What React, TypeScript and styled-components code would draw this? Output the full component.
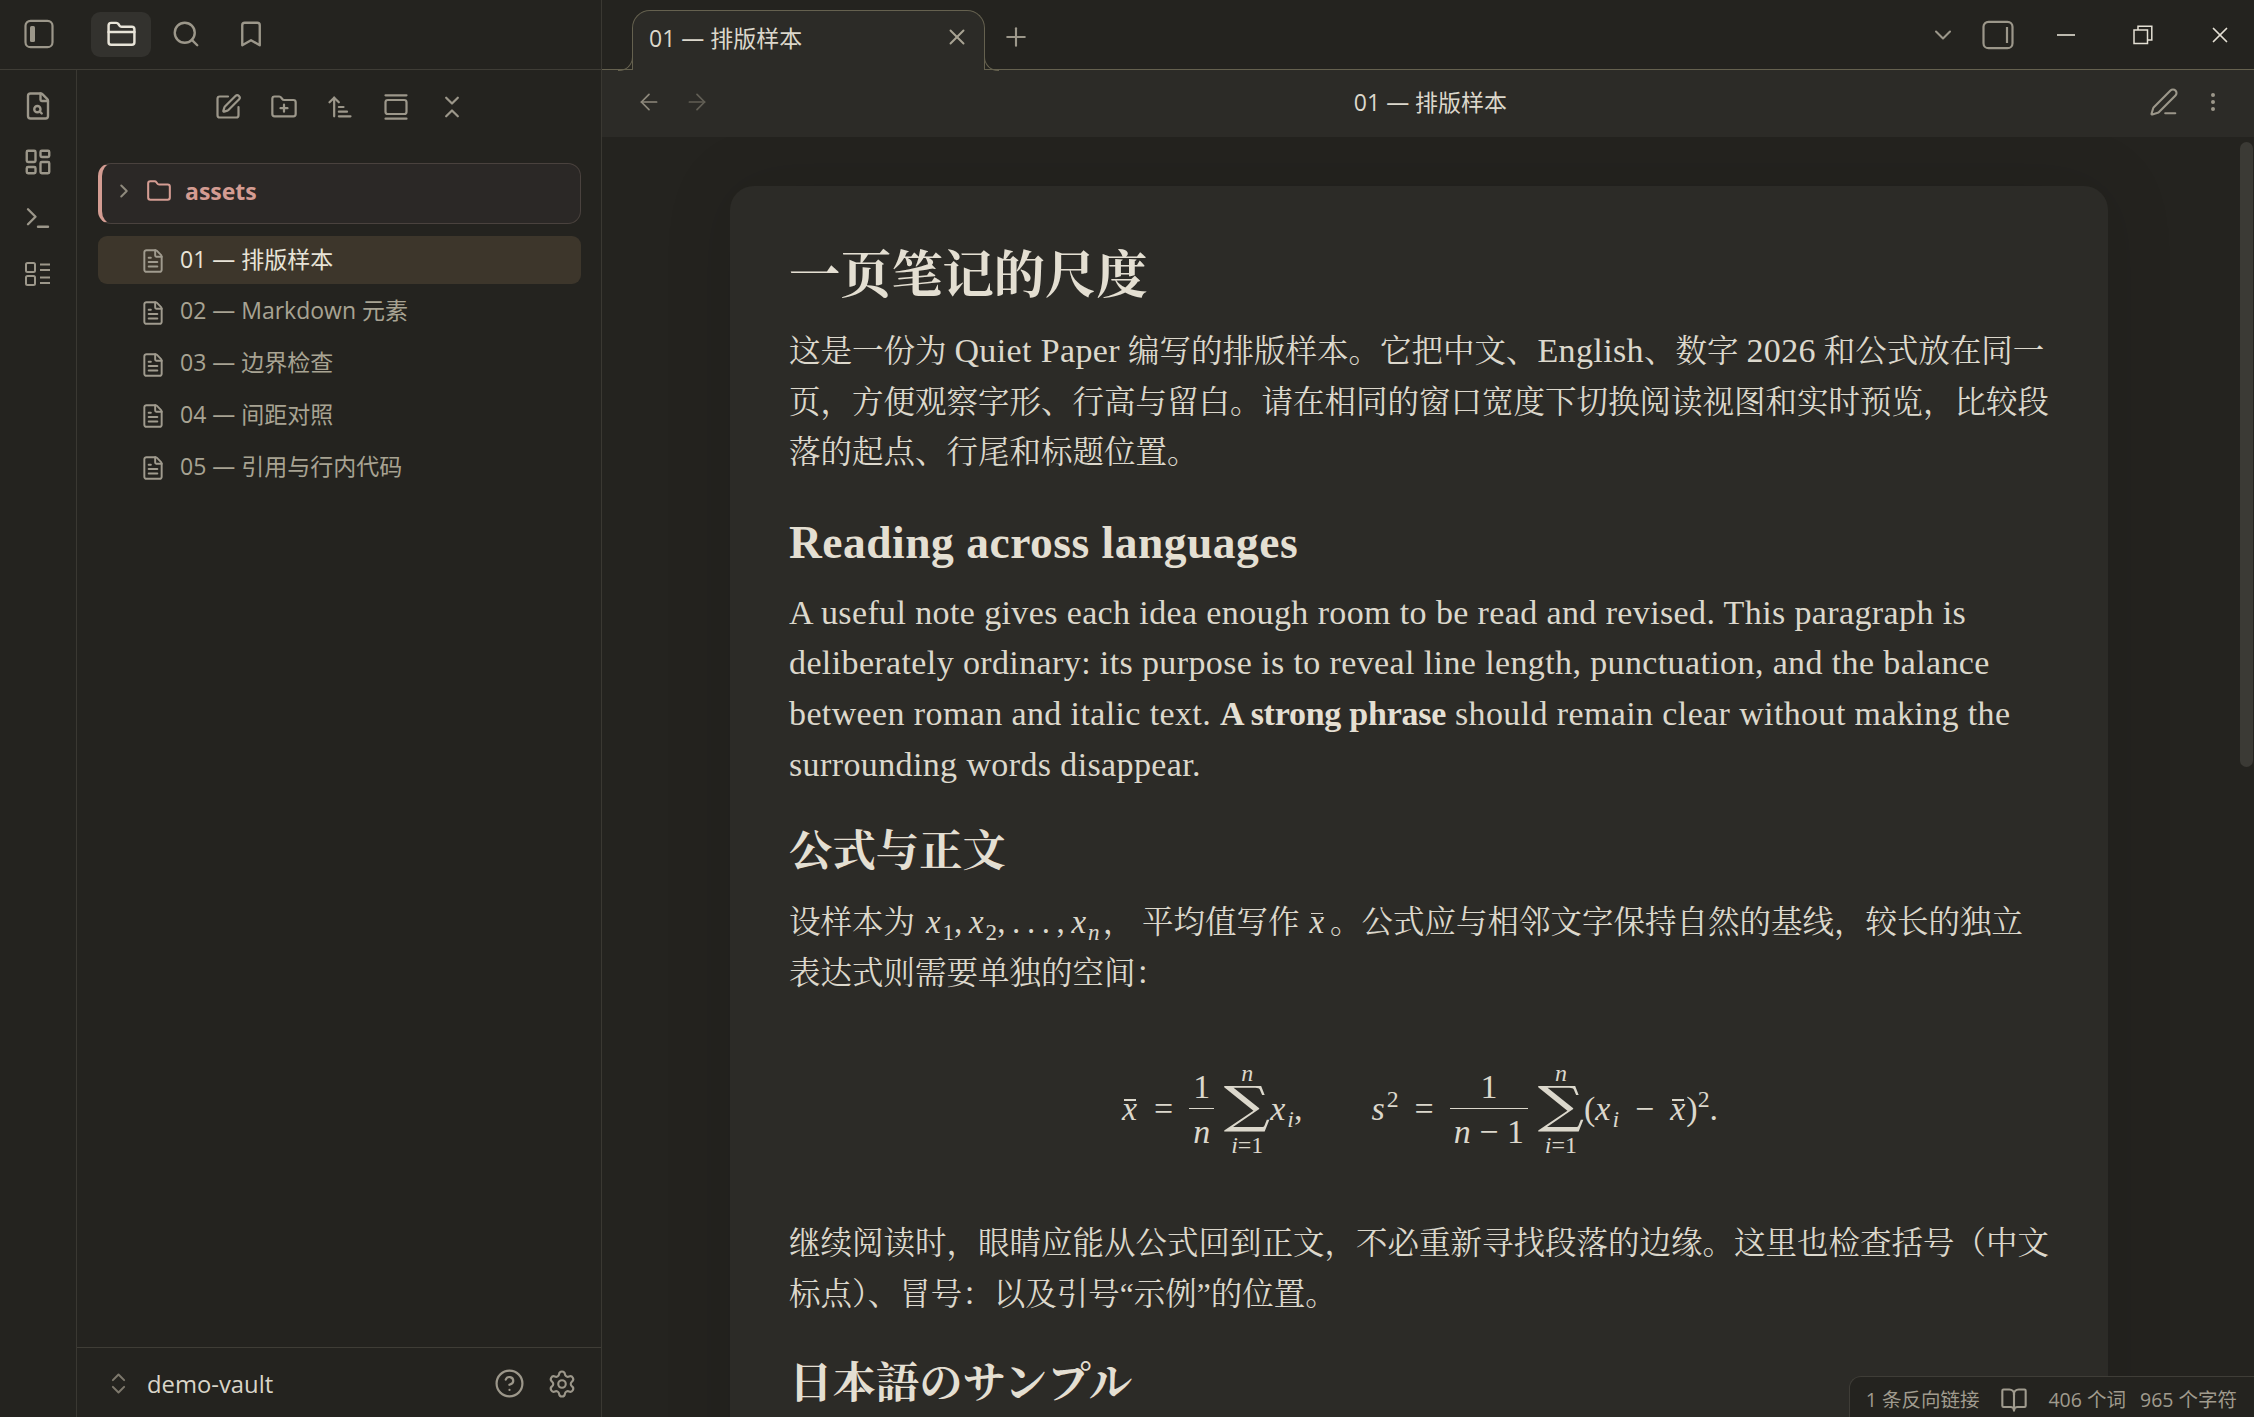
import React from 'react';
import styled, { createGlobalStyle } from 'styled-components';
import {
  ArrowLeft,
  ArrowRight,
  ArrowUpNarrowWide,
  Bookmark,
  BookOpen,
  ChevronDown,
  ChevronRight,
  ChevronsDownUp,
  ChevronsUpDown,
  CircleHelp,
  EllipsisVertical,
  FileSearch,
  FileText,
  Folder,
  FolderClosed,
  FolderPlus,
  GalleryVertical,
  LayoutDashboard,
  PenLine,
  Plus,
  Search,
  Settings,
  SquarePen,
  Terminal,
  X,
} from 'lucide-react';

const UI_FONT = `"Open Sans", "Noto Sans CJK SC", sans-serif`;
const READ_FONT = `"Liberation Serif", "Noto Serif CJK SC", "Noto Sans CJK SC", serif`;

const GlobalStyle = createGlobalStyle`
  html, body {
    margin: 0;
    padding: 0;
    height: 100%;
    background: #24231f;
    overflow: hidden;
  }
  * { box-sizing: border-box; }
`;

const Shell = styled.div`
  display: flex;
  width: 2254px;
  height: 1417px;
  background: #24231f;
  color: #dcd8cc;
  font-family: ${UI_FONT};
  overflow: hidden;
`;

/* left side: sidebar tabs on top, ribbon + file panel below */
const LeftPane = styled.aside`
  flex: 0 0 602px;
  display: flex;
  flex-direction: column;
  border-right: 1px solid #3a3832;
`;

const SideTabs = styled.div`
  flex: 0 0 70px;
  display: flex;
  align-items: center;
  padding: 0 0 1px 24px;
  border-bottom: 1px solid #3f3d36;
`;

const ToggleSlot = styled.div`
  display: flex;
  width: 67px;
  color: #9c978a;
`;

const SideTab = styled.div<{ $active?: boolean }>`
  width: 60px;
  height: 45px;
  margin-right: 5px;
  display: flex;
  align-items: center;
  justify-content: center;
  border-radius: 9px;
  color: ${(p) => (p.$active ? '#e8e4d8' : '#9c978a')};
  background: ${(p) => (p.$active ? '#33322e' : 'transparent')};
`;

const LeftBody = styled.div`
  flex: 1;
  display: flex;
  min-height: 0;
`;

const Ribbon = styled.nav`
  flex: 0 0 77px;
  display: flex;
  flex-direction: column;
  align-items: center;
  gap: 26px;
  padding-top: 21px;
  border-right: 1px solid #3a3832;
  color: #9c978a;
`;

const FilePanel = styled.div`
  flex: 1;
  display: flex;
  flex-direction: column;
  min-width: 0;
`;

const NavButtons = styled.div`
  display: flex;
  justify-content: center;
  gap: 28px;
  padding: 23px 0 0 2px;
  height: 93px;
  color: #9c978a;
`;

const FileTree = styled.div`
  flex: 1;
  padding: 0 20px 0 21px;
`;

const FolderRow = styled.div`
  height: 61px;
  display: flex;
  align-items: center;
  padding: 0 0 6px 11px;
  border: 1px solid #4a423e;
  border-left: 4px solid #d49c92;
  border-radius: 13px;
  background: #2b2826;
  color: #8f8a7d;
  margin-bottom: 12px;
`;

const FolderIcon = styled.span`
  display: flex;
  margin: 0 13px 0 11px;
  color: #d49c92;
`;

const FolderName = styled.span`
  font-size: 23px;
  font-weight: 700;
  color: #d49c92;
`;

const FileRow = styled.div<{ $active?: boolean }>`
  height: 48px;
  margin-bottom: 3.75px;
  display: flex;
  align-items: center;
  padding-left: 42px;
  border-radius: 9px;
  font-size: 23px;
  white-space: nowrap;
  color: ${(p) => (p.$active ? '#e8e4d8' : '#a8a393')};
  background: ${(p) => (p.$active ? '#3d362b' : 'transparent')};

  svg {
    color: #a09b8e;
    margin: 2px 14px 0 0;
    flex: none;
  }
`;

const FileLabel = styled.span`
  display: block;
  margin-bottom: 5px;
`;

const VaultBar = styled.div`
  flex: 0 0 70px;
  display: flex;
  align-items: center;
  padding: 2px 24px 0 28px;
  border-top: 1px solid #3f3d36;
  color: #7d786c;
`;

const VaultName = styled.span`
  flex: 1;
  margin-left: 15px;
  font-size: 23.8px;
  color: #d9d5c9;
`;

const VaultAction = styled.span`
  display: flex;
  margin-left: 22px;
  color: #9c978a;
`;

/* right side: tab strip, view header, scrolling note */
const MainPane = styled.main`
  flex: 1;
  display: flex;
  flex-direction: column;
  min-width: 0;
`;

const TabStrip = styled.div`
  flex: 0 0 70px;
  display: flex;
  align-items: flex-end;
  padding-left: 30px;
  border-bottom: 1px solid #65614f;
`;

const Tab = styled.div`
  position: relative;
  width: 353px;
  height: 60px;
  margin-bottom: -1px;
  padding: 0 14px 7px 16px;
  display: flex;
  align-items: center;
  justify-content: space-between;
  background: #2c2b27;
  border: 1.5px solid #65614f;
  border-bottom: none;
  border-radius: 18px 18px 0 0;
  font-size: 23px;
  color: #dcd8cc;

  &::before,
  &::after {
    content: '';
    position: absolute;
    bottom: -1px;
    width: 14px;
    height: 14px;
    border-bottom: 1.5px solid #65614f;
  }

  &::before {
    left: -15px;
    border-right: 1.5px solid #65614f;
    border-bottom-right-radius: 14px;
  }

  &::after {
    right: -15px;
    border-left: 1.5px solid #65614f;
    border-bottom-left-radius: 14px;
  }
`;

const TabClose = styled.span`
  display: flex;
  color: #a8a393;
`;

const NewTab = styled.span`
  display: flex;
  margin: 0 0 17px 16px;
  color: #9c978a;
`;

const StripActions = styled.div`
  margin: 0 -4px 0 auto;
  height: 69px;
  display: flex;
  align-items: center;
  color: #9c978a;
`;

const LayoutActions = styled.div`
  display: flex;
  align-items: center;
  gap: 25px;
  margin-right: 13px;
`;

const WinButton = styled.span`
  width: 77px;
  height: 69px;
  display: flex;
  align-items: center;
  justify-content: center;
  color: #e4e0d4;
`;

const ViewHeader = styled.header`
  flex: 0 0 67px;
  display: flex;
  align-items: center;
  padding: 0 29px 3px 34px;
  background: #2c2b27;
`;

const HistoryButton = styled.span<{ $dim?: boolean }>`
  display: flex;
  margin-right: 22px;
  color: ${(p) => (p.$dim ? '#625f55' : '#8e897c')};
`;

const ViewTitle = styled.div`
  flex: 1;
  text-align: center;
  font-size: 23px;
  color: #dcd8cc;
  margin-bottom: 2px;
`;

const ViewAction = styled.span<{ $gap: number }>`
  display: flex;
  margin-left: ${(p) => p.$gap}px;
  color: #9c978a;
`;

const NoteArea = styled.div`
  position: relative;
  flex: 1;
  min-height: 0;
  overflow: hidden;
  padding: 49px 146px 0 128px;
  background: #24231f;
`;

const Thumb = styled.div`
  position: absolute;
  top: 5px;
  right: 1px;
  width: 13px;
  height: 625px;
  border-radius: 7px;
  background: #3b3a35;
`;

const Card = styled.article`
  min-height: 1400px;
  padding: 55px 58px 0 59px;
  border-radius: 24px;
  background: #2c2b27;
  box-shadow: 0 0 70px rgba(0, 0, 0, 0.12);
  font-family: ${READ_FONT};
  font-size: 31.5px;
  line-height: 50.6px;
  color: #dcd8cc;
`;

const Title = styled.h1`
  margin: 0 0 16px;
  font-size: 51.2px;
  line-height: 70px;
  font-weight: 700;
  color: #e4dfd2;
`;

const Heading = styled.h2<{ $top: number; $bottom?: number }>`
  margin: ${(p) => p.$top}px 0 ${(p) => p.$bottom ?? 15}px;
  font-size: 43.4px;
  line-height: 60px;
  font-weight: 700;
  color: #e4dfd2;
`;

const HeadingLatin = styled.span`
  font-size: 45.5px;
  letter-spacing: 0.5px;
`;

const Para = styled.p`
  margin: 0;
`;

const Line = styled.span`
  display: block;
  white-space: nowrap;
`;

const Latin = styled.span`
  font-size: 34px;
  line-height: 1;
  letter-spacing: 0.38px;
`;

const Strong = styled.strong`
  font-weight: 700;
  letter-spacing: -0.25px;
  color: #e4dfd2;
`;

const InlineMath = styled.span<{ $left: number; $right: number }>`
  margin: 0 ${(p) => p.$right}px 0 ${(p) => p.$left}px;
  font-size: 33px;
  line-height: 1;
`;

const Var = styled.i`
  font-style: italic;
  letter-spacing: 2px;
`;

const Barred = styled.i`
  position: relative;
  display: inline-block;
  font-style: italic;
  line-height: 1;
  letter-spacing: 1px;

  &::before {
    content: '';
    position: absolute;
    left: 2px;
    right: 2px;
    top: 0.2em;
    height: 1.5px;
    background: currentColor;
  }
`;

const Sub = styled.sub`
  font-size: 0.7em;
  line-height: 0;
  vertical-align: -0.3em;
  font-style: normal;
`;

const Sup = styled.sup`
  font-size: 0.7em;
  line-height: 0;
  vertical-align: 0.55em;
  font-style: normal;
`;

const MathBlock = styled.div`
  height: 220px;
  display: flex;
  align-items: center;
  justify-content: center;
  gap: 69px;
  padding-left: 1px;
  font-size: 34px;
  line-height: 1;
  white-space: nowrap;
`;

const Formula = styled.div`
  display: flex;
  align-items: center;
`;

const Run = styled.span`
  display: block;
`;

const Rel = styled.span`
  margin: 0 16px;
`;

const Frac = styled.div`
  display: inline-flex;
  flex-direction: column;
  align-items: center;
  margin-right: 10px;
`;

const FracTop = styled.span`
  padding: 0 4px 4px;
`;

const FracBottom = styled.span`
  width: 100%;
  text-align: center;
  padding: 6px 4px 0;
  border-top: 1.5px solid #dcd8cc;
`;

const BigOp = styled.div`
  display: inline-flex;
  flex-direction: column;
  align-items: center;
  width: 46px;
`;

const Limit = styled.span<{ $lower?: boolean }>`
  font-size: 24px;
  line-height: 23px;
  margin-top: ${(p) => (p.$lower ? 3 : 0)}px;
`;

const Sigma = styled.span`
  display: inline-block;
  font-size: 50px;
  line-height: 46px;
  font-family: "DejaVu Serif", serif;
  transform: translateY(-3px) scaleX(1.3);
`;

const StatusBar = styled.footer`
  position: absolute;
  right: 0;
  bottom: 0;
  height: 41px;
  display: flex;
  align-items: center;
  padding: 5px 17px 0 16px;
  border: 1px solid #3f3d37;
  border-width: 1px 0 0 1px;
  border-top-left-radius: 12px;
  background: #24231f;
  font-family: ${UI_FONT};
  font-size: 19.5px;
  line-height: 1;
  color: #a09b8e;
  white-space: nowrap;
`;

const StatusItem = styled.span<{ $gap: number }>`
  display: flex;
  margin-right: ${(p) => p.$gap}px;
`;

const files = ['01 — 排版样本', '02 — Markdown 元素', '03 — 边界检查', '04 — 间距对照', '05 — 引用与行内代码'];

const PanelLeftIcon = () => (
  <svg width="30" height="30" viewBox="0 0 30 30" fill="none" stroke="currentColor" strokeWidth="2.2">
    <rect x="1.5" y="1.8" width="27" height="26.4" rx="5" />
    <rect x="6" y="7" width="5" height="16" rx="1.5" fill="currentColor" stroke="none" />
  </svg>
);

const PanelRightIcon = () => (
  <svg width="32" height="30" viewBox="0 0 32 30" fill="none" stroke="currentColor" strokeWidth="2.2">
    <rect x="1.5" y="1.8" width="29" height="26.4" rx="5" />
    <path d="M25 7v16" />
  </svg>
);

const ChecklistIcon = () => (
  <svg width="30" height="30" viewBox="0 0 30 30" fill="none" stroke="currentColor" strokeWidth="2">
    <rect x="3" y="4" width="9" height="9" rx="1.5" />
    <rect x="3" y="17" width="9" height="9" rx="1.5" />
    <path d="M17 5.5h10M17 11h10M17 18.5h10M17 24h10" />
  </svg>
);

const MinimizeIcon = () => (
  <svg width="20" height="4" viewBox="0 0 20 4" fill="none" stroke="currentColor" strokeWidth="1.6">
    <path d="M1 2h18" />
  </svg>
);

const RestoreIcon = () => (
  <svg width="20" height="20" viewBox="0 0 20 20" fill="none" stroke="currentColor" strokeWidth="1.5">
    <rect x="1" y="5" width="13.5" height="13.5" />
    <path d="M5 5V1.2h13.8V15h-4.3" />
  </svg>
);

const SumOp = () => (
  <BigOp>
    <Limit>
      <i>n</i>
    </Limit>
    <Sigma>∑</Sigma>
    <Limit $lower>
      <i>i</i>=1
    </Limit>
  </BigOp>
);

const App: React.FC = () => {
  return (
    <Shell>
      <GlobalStyle />
      <LeftPane>
        <SideTabs>
          <ToggleSlot>
            <PanelLeftIcon />
          </ToggleSlot>
          <SideTab $active>
            <FolderClosed size={31} strokeWidth={1.9} />
          </SideTab>
          <SideTab>
            <Search size={30} strokeWidth={1.9} />
          </SideTab>
          <SideTab>
            <Bookmark size={30} strokeWidth={1.9} />
          </SideTab>
        </SideTabs>
        <LeftBody>
          <Ribbon>
            <FileSearch size={30} strokeWidth={1.9} />
            <LayoutDashboard size={30} strokeWidth={1.9} />
            <Terminal size={30} strokeWidth={1.9} />
            <ChecklistIcon />
          </Ribbon>
          <FilePanel>
            <NavButtons>
              <SquarePen size={28} strokeWidth={1.9} />
              <FolderPlus size={28} strokeWidth={1.9} />
              <ArrowUpNarrowWide size={28} strokeWidth={1.9} />
              <GalleryVertical size={28} strokeWidth={1.9} />
              <ChevronsDownUp size={28} strokeWidth={1.9} />
            </NavButtons>
            <FileTree>
              <FolderRow>
                <ChevronRight size={22} strokeWidth={2.2} />
                <FolderIcon>
                  <Folder size={26} strokeWidth={1.9} />
                </FolderIcon>
                <FolderName>assets</FolderName>
              </FolderRow>
              {files.map((name, i) => (
                <FileRow key={name} $active={i === 0}>
                  <FileText size={26} strokeWidth={1.8} />
                  <FileLabel>{name}</FileLabel>
                </FileRow>
              ))}
            </FileTree>
            <VaultBar>
              <ChevronsUpDown size={27} strokeWidth={1.8} />
              <VaultName>demo-vault</VaultName>
              <VaultAction>
                <CircleHelp size={31} strokeWidth={1.7} />
              </VaultAction>
              <VaultAction>
                <Settings size={30} strokeWidth={1.7} />
              </VaultAction>
            </VaultBar>
          </FilePanel>
        </LeftBody>
      </LeftPane>

      <MainPane>
        <TabStrip>
          <Tab>
            01 — 排版样本
            <TabClose>
              <X size={26} strokeWidth={1.8} />
            </TabClose>
          </Tab>
          <NewTab>
            <Plus size={30} strokeWidth={1.7} />
          </NewTab>
          <StripActions>
            <LayoutActions>
              <ChevronDown size={28} strokeWidth={1.8} />
              <PanelRightIcon />
            </LayoutActions>
            <WinButton>
              <MinimizeIcon />
            </WinButton>
            <WinButton>
              <RestoreIcon />
            </WinButton>
            <WinButton>
              <X size={26} strokeWidth={1.6} />
            </WinButton>
          </StripActions>
        </TabStrip>
        <ViewHeader>
          <HistoryButton>
            <ArrowLeft size={26} strokeWidth={1.6} />
          </HistoryButton>
          <HistoryButton $dim>
            <ArrowRight size={26} strokeWidth={1.6} />
          </HistoryButton>
          <ViewTitle>01 — 排版样本</ViewTitle>
          <ViewAction $gap={20}>
            <PenLine size={30} strokeWidth={1.7} />
          </ViewAction>
          <ViewAction $gap={22}>
            <EllipsisVertical size={24} strokeWidth={2} />
          </ViewAction>
        </ViewHeader>
        <NoteArea>
          <Card>
            <Title>一页笔记的尺度</Title>
            <Para>
              <Line>
                这是一份为 <Latin>Quiet Paper</Latin> 编写的排版样本。它把中文、<Latin>English</Latin>、数字{' '}
                <Latin>2026</Latin> 和公式放在同一
              </Line>
              <Line>页，方便观察字形、行高与留白。请在相同的窗口宽度下切换阅读视图和实时预览，比较段</Line>
              <Line>落的起点、行尾和标题位置。</Line>
            </Para>
            <Heading $top={34} $bottom={16}>
              <HeadingLatin>Reading across languages</HeadingLatin>
            </Heading>
            <Para>
              <Line>
                <Latin>A useful note gives each idea enough room to be read and revised. This paragraph is</Latin>
              </Line>
              <Line>
                <Latin>deliberately ordinary: its purpose is to reveal line length, punctuation, and the balance</Latin>
              </Line>
              <Line>
                <Latin>
                  between roman and italic text. <Strong>A strong phrase</Strong> should remain clear without making the
                </Latin>
              </Line>
              <Line>
                <Latin>surrounding words disappear.</Latin>
              </Line>
            </Para>
            <Heading $top={30} $bottom={17}>
              公式与正文
            </Heading>
            <Para>
              <Line>
                设样本为{' '}
                <InlineMath $left={3} $right={3}>
                  <Var>x</Var>
                  <Sub>1</Sub>,{'\u2009'}
                  <Var>x</Var>
                  <Sub>2</Sub>,{'\u2009'}.{'\u2009'}.{'\u2009'}.{'\u2009'},{'\u2009'}
                  <Var>x</Var>
                  <Sub>
                    <i>n</i>
                  </Sub>
                </InlineMath>
                ， 平均值写作{' '}
                <InlineMath $left={2} $right={5}>
                  <Barred>x</Barred>
                </InlineMath>
                。公式应与相邻文字保持自然的基线，较长的独立
              </Line>
              <Line>表达式则需要单独的空间：</Line>
            </Para>
            <MathBlock>
              <Formula>
                <Barred>x</Barred>
                <Rel>=</Rel>
                <Frac>
                  <FracTop>1</FracTop>
                  <FracBottom>
                    <i>n</i>
                  </FracBottom>
                </Frac>
                <SumOp />
                <Run>
                  <Var>x</Var>
                  <Sub>
                    <i>i</i>
                  </Sub>
                  ,
                </Run>
              </Formula>
              <Formula>
                <Run>
                  <Var>s</Var>
                  <Sup>2</Sup>
                </Run>
                <Rel>=</Rel>
                <Frac>
                  <FracTop>1</FracTop>
                  <FracBottom>
                    <i>n</i> − 1
                  </FracBottom>
                </Frac>
                <SumOp />
                <Run>
                  (<Var>x</Var>
                  <Sub>
                    <i>i</i>
                  </Sub>
                  <Rel>−</Rel>
                  <Barred>x</Barred>)<Sup>2</Sup>.
                </Run>
              </Formula>
            </MathBlock>
            <Para>
              <Line>继续阅读时，眼睛应能从公式回到正文，不必重新寻找段落的边缘。这里也检查括号（中文</Line>
              <Line>标点）、冒号：以及引号“示例”的位置。</Line>
            </Para>
            <Heading $top={32}>日本語のサンプル</Heading>
          </Card>
          <Thumb />
          <StatusBar>
            <StatusItem $gap={21}>1 条反向链接</StatusItem>
            <StatusItem $gap={20}>
              <BookOpen size={28} strokeWidth={1.8} />
            </StatusItem>
            <StatusItem $gap={14}>406 个词</StatusItem>
            <StatusItem $gap={0}>965 个字符</StatusItem>
          </StatusBar>
        </NoteArea>
      </MainPane>
    </Shell>
  );
};

export default App;
